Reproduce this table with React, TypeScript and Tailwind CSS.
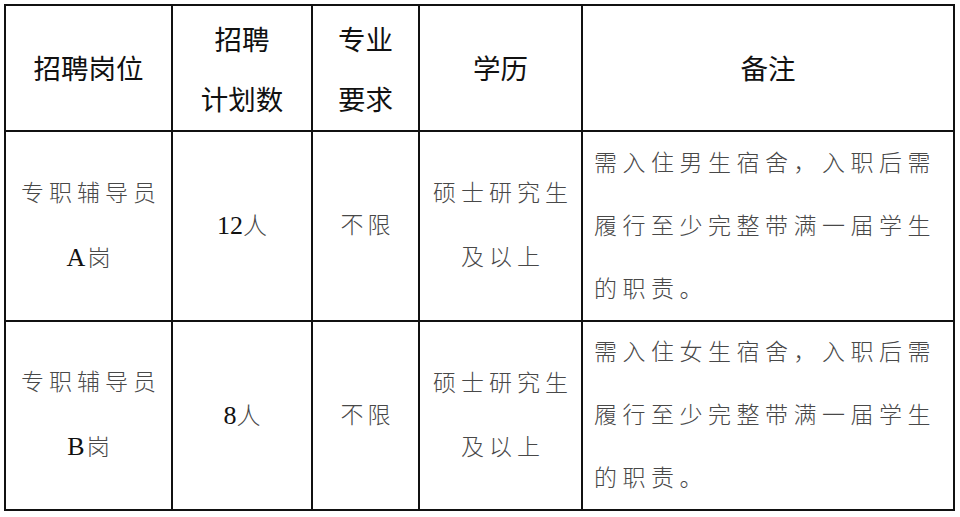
import React from "react";

const sans = "font-['Noto_Sans_CJK_SC',sans-serif]";
const body = "font-['Liberation_Serif','Noto_Sans_CJK_SC',serif]";

function Cell({ children, className = "" }: { children?: React.ReactNode; className?: string }) {
  return <div className={`bg-white flex flex-col justify-center ${className}`}>{children}</div>;
}

function Gray({ children }: { children: React.ReactNode }) {
  return <span className="text-[#484848] font-light">{children}</span>;
}

function Row({ pos, count, gender }: { pos: string; count: string; gender: string }) {
  return (
    <>
      <Cell className={`items-center text-[23px] leading-[64px] ${body}`}>
        <div className="tracking-[5px] pl-[5px]"><Gray>专职辅导员</Gray></div>
        <div className="tracking-[2px] pl-[2px]">
          <span className="text-[#111] text-[26px]">{pos}</span>
          <Gray>岗</Gray>
        </div>
      </Cell>
      <Cell className={`items-center text-[24px] leading-[40px] ${body}`}>
        <div>
          <span className="text-[#111] text-[26px]">{count}</span>
          <Gray>人</Gray>
        </div>
      </Cell>
      <Cell className={`items-center text-[23px] leading-[40px] ${body}`}>
        <div className="tracking-[4px] pl-[4px]"><Gray>不限</Gray></div>
      </Cell>
      <Cell className={`items-center text-[23px] leading-[64px] ${body}`}>
        <div className="tracking-[5px] pl-[5px]"><Gray>硕士研究生</Gray></div>
        <div className="tracking-[5px] pl-[5px]"><Gray>及以上</Gray></div>
      </Cell>
      <Cell className={`items-start pl-[11px] text-[23px] leading-[63px] tracking-[5.5px] ${body}`}>
        <div><Gray>需入住{gender}生宿舍，入职后需</Gray></div>
        <div><Gray>履行至少完整带满一届学生</Gray></div>
        <div><Gray>的职责。</Gray></div>
      </Cell>
    </>
  );
}

export default function App() {
  return (
    <div className="w-[960px] h-[517px] bg-white overflow-hidden">
      <div className="ml-[4px] mt-[4px] w-[951px] grid grid-cols-[165px_138px_105px_161px_370px] grid-rows-[124px_188px_187px] gap-[2px] p-[2px] bg-[#111]">
        <Cell className={`items-center text-[27.5px] text-[#111] ${sans}`}>
          <div>招聘岗位</div>
        </Cell>
        <Cell className={`items-center text-[27.5px] leading-[60px] text-[#111] ${sans}`}>
          <div>招聘</div>
          <div>计划数</div>
        </Cell>
        <Cell className={`items-center text-[27.5px] leading-[60px] text-[#111] ${sans}`}>
          <div>专业</div>
          <div>要求</div>
        </Cell>
        <Cell className={`items-center text-[27.5px] text-[#111] ${sans}`}>
          <div>学历</div>
        </Cell>
        <Cell className={`items-center text-[27.5px] text-[#111] ${sans}`}>
          <div>备注</div>
        </Cell>
        <Row pos="A" count="12" gender="男" />
        <Row pos="B" count="8" gender="女" />
      </div>
    </div>
  );
}
